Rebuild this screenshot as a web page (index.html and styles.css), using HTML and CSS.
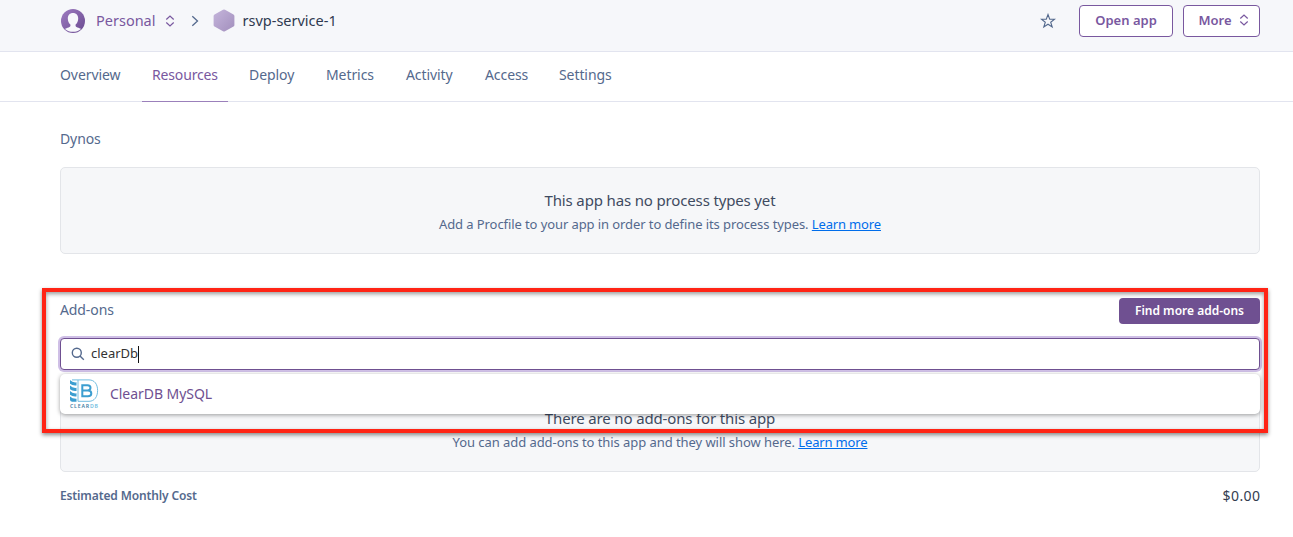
FILE: index.html
```html
<!DOCTYPE html>
<html lang="en">
<head>
<meta charset="utf-8">
<title>rsvp-service-1 · Resources</title>
<link rel="stylesheet" href="styles.css">
</head>
<body>
<header class="topbar">
  <svg class="avatar" viewBox="0 0 24 24"><defs><linearGradient id="av" x1="0" y1="0" x2="1" y2="1"><stop offset="0" stop-color="#9e7cc1"/><stop offset="1" stop-color="#6a4a90"/></linearGradient></defs><circle cx="12" cy="12" r="12" fill="url(#av)"/><path d="M12 4c-3.200 0-5.200 2.200-5.200 5.400 0 2.600 1 4.800 2.600 6 .3 1.800-.4 2.500-1.800 3-1.500.5-2.600.700-3.600 1.500C6.200 21.800 9 22.800 12 22.800s5.800-1 8-2.900c-1-.8-2.100-1-3.600-1.500-1.400-.5-2.100-1.200-1.800-3 1.600-1.200 2.600-3.400 2.600-6C17.200 6.200 15.200 4 12 4z" fill="#f7f8fb"/></svg>
  <span class="account">Personal</span>
  <svg class="updown" viewBox="0 0 10 12"><path d="M1.300 4.500 5 1l3.700 3.500M1.300 7.500 5 11l3.700-3.500"/></svg>
  <svg class="crumb" viewBox="0 0 8 12"><path d="M1.300 1.200 6.500 6l-5.200 4.800"/></svg>
  <svg class="hex" viewBox="0 0 22 23"><defs><linearGradient id="hx" x1="0" y1="0" x2="1" y2="1"><stop offset="0" stop-color="#c5b5db"/><stop offset="1" stop-color="#a28fbd"/></linearGradient></defs><path d="M10 .8q1-.6 2 0l8.500 4.700q.9.500.9 1.500v9q0 1-.9 1.500L12 22.200q-1 .6-2 0l-8.500-4.700Q.6 17 .6 16V7q0-1 .9-1.500z" fill="url(#hx)"/></svg>
  <span class="appname">rsvp-service-1</span>
  <svg class="star" viewBox="0 0 16 16"><path d="M8 1.500 9.700 6.200H14.600L10.700 9.200 12.200 14 8 11.200 3.800 14 5.300 9.200 1.400 6.200H6.300z"/></svg>
  <a class="btn open">Open app</a>
  <a class="btn more"><span>More</span><svg class="updown" viewBox="0 0 10 12"><path d="M1.300 4.500 5 1l3.700 3.500M1.300 7.500 5 11l3.700-3.500"/></svg></a>
</header>
<nav class="tabs">
  <a class="tab t-overview">Overview</a>
  <a class="tab t-resources active">Resources</a>
  <a class="tab t-deploy">Deploy</a>
  <a class="tab t-metrics">Metrics</a>
  <a class="tab t-activity">Activity</a>
  <a class="tab t-access">Access</a>
  <a class="tab t-settings">Settings</a>
</nav>
<main class="content">
  <h2 class="heading dynos">Dynos</h2>
  <section class="panel">
    <p class="panel-title">This app has no process types yet</p>
    <p class="panel-text"><span class="procfile">Add a Procfile to your app in order to define its process types.</span> <a class="link">Learn more</a></p>
  </section>
  <section class="addons">
    <div class="addons-head">
      <h2 class="heading addons-title">Add-ons</h2>
      <a class="find">Find more add-ons</a>
    </div>
    <div class="search">
      <svg class="magnifier" viewBox="0 0 14 14"><circle cx="5.800" cy="5.800" r="4.500"/><path d="m9 9 3.800 3.800"/></svg>
      <span class="query">clearDb</span><span class="caret"></span>
      <div class="menu">
        <svg class="cleardb" viewBox="0 0 30 30">
          <g fill="#3c9ed0"><path d="M1 1q2.500 2.800 6.500 2.300v3.200Q3.500 7 1 4.800zM1 6.500q2.500 2.800 6.500 2.300v3.200Q3.500 12.500 1 10.300zM1 12q2.500 2.800 6.500 2.300v3.200Q3.500 18 1 15.800zM1 17.500q2.500 2.500 6.500 2.300v3H3q-2-.3-2-2z"/></g>
          <path d="M3 .9h17c5.500 0 8.600 4.300 8.600 10.600S25.500 22.300 20 22.300H9V1" fill="none" stroke="#72bde0" stroke-width="1"/>
          <path d="M13.300 6.200h5.200q3 0 3 2.600 0 2.700-3 2.700h-5.200zm0 5.300h5.700q3.300 0 3.300 2.900 0 2.800-3.300 2.800h-5.700z" fill="none" stroke="#3c9ed0" stroke-width="2"/>
          <text x="1" y="28.800" textLength="28" class="logo-text">CLEAR<tspan class="logo-light">DB</tspan></text>
        </svg>
        <span class="menu-label">ClearDB MySQL</span>
      </div>
    </div>
    <div class="panel addons-panel">
      <p class="panel-title">There are no add-ons for this app</p>
      <p class="panel-text none">You can add add-ons to this app and they will show here. <a class="link">Learn more</a></p>
    </div>
    <div class="highlight"></div>
  </section>
  <footer class="cost"><span class="cost-label">Estimated Monthly Cost</span><span class="price">$0.00</span></footer>
</main>
</body>
</html>
```
FILE: styles.css
```css
* { box-sizing: border-box; }
body { margin: 0; background: #fff; color: #54698d; font-family: "Noto Sans", sans-serif; font-size: 14px; line-height: 20px; overflow: hidden; white-space: nowrap; }
p, h2 { margin: 0; font-weight: 400; }
svg { display: block; flex: none; fill: none; }

.topbar { display: flex; align-items: center; height: 52px; padding: 0 33px 10px 61px; background: #f6f7fa; border-bottom: 1px solid #e2e4ef; }
.avatar { width: 24px; height: 24px; }
.account { width: 60px; margin-left: 11px; padding-bottom: 2px; color: #79589f; font-size: 14.5px; }
.updown { width: 10px; height: 12px; stroke: #79589f; stroke-width: 1.2; }
.topbar > .updown { margin-left: 9px; }
.crumb { width: 8px; height: 12px; margin-left: 16px; stroke: #54698d; stroke-width: 1.3; }
.hex { width: 22px; height: 23px; margin-left: 14px; }
.appname { margin-left: 7.5px; padding-bottom: 2px; color: #2f3a50; font-size: 14.5px; }
.star { width: 16px; height: 16px; margin-left: auto; margin-right: 23px; stroke: #54698d; stroke-width: 1.1; }
.btn { display: flex; align-items: center; justify-content: center; height: 32px; padding-bottom: 1px; border: 1px solid #79589f; border-radius: 4px; background: #fff; color: #79589f; font-size: 13px; font-weight: 600; }
.open { width: 94px; margin-right: 10px; }
.more { width: 77px; gap: 7px; padding-left: 4px; }

.tabs { display: flex; gap: 11px; height: 50px; padding-left: 50px; border-bottom: 1px solid #e2e4ef; font-size: 14px; }
.tab { height: 50px; padding: 13px 10px 0; border-bottom: 1px solid transparent; letter-spacing: -.08px; }
.active { color: #79589f; border-color: #9b80bb; letter-spacing: -.15px; }
.t-overview { width: 81px; }
.t-resources { width: 86px; }
.t-deploy { width: 66px; }
.t-metrics { width: 69px; }
.t-activity { width: 68px; }
.t-access { width: 63px; }

.content { padding: 27px 33px 0 60px; }
.heading { font-size: 14px; line-height: 20px; letter-spacing: -.1px; }
.panel { height: 87px; margin-top: 18px; padding-top: 20px; border: 1px solid #e3e5e9; border-radius: 5px; background: #f6f7f9; text-align: center; }
.panel-title { color: #3f4b61; font-size: 15px; line-height: 24px; letter-spacing: -.15px; }
.panel-text { font-size: 13px; line-height: 24px; letter-spacing: -.09px; }
.none { letter-spacing: -.06px; }
.link { color: #006deb; text-decoration: underline; text-underline-offset: 1px; letter-spacing: -.15px; }

.addons { position: relative; margin-top: 44px; }
.addons-head { display: flex; justify-content: space-between; height: 26px; }
.addons-title { margin-top: 2px; }
.find { width: 141px; height: 26px; border-radius: 4px; background: #6f5091; color: #fff; text-align: center; font-size: 12px; font-weight: 600; line-height: 26px; }
.search { position: relative; display: flex; align-items: center; height: 32px; margin-top: 14px; padding-left: 10px; border: 1px solid #6f5091; border-radius: 4px; background: #fff; box-shadow: 0 0 0 2px #cfbfe6; }
.magnifier { width: 14px; height: 14px; stroke: #54698d; stroke-width: 1.4; }
.query { margin-left: 6px; padding-bottom: 2px; color: #333; font-size: 13px; }
.caret { width: 1px; height: 17px; background: #111; }
.menu { position: absolute; z-index: 1; top: 35px; left: -1px; right: -1px; display: flex; align-items: center; height: 40px; padding-left: 9px; border-radius: 5px; background: #fff; box-shadow: 0 1px 4px rgba(0,0,0,.38); }
.cleardb { width: 30px; height: 30px; }
.logo-text { fill: #3f7fa5; font: 600 5.2px "Noto Sans", sans-serif; }
.logo-light { fill: #72bde0; }
.menu-label { margin-left: 11px; color: #6f5091; font-size: 14px; letter-spacing: -.05px; }
.addons-panel { margin-top: 15px; }
.highlight { position: absolute; z-index: 2; top: -10px; left: -18px; width: 1226px; height: 145px; border: 4px solid #ff2415; box-shadow: 0 2px 4px rgba(0,0,0,.45), inset 0 2px 4px rgba(0,0,0,.4); }
.cost { display: flex; justify-content: space-between; margin-top: 14px; }
.cost-label { font-size: 12px; font-weight: 600; letter-spacing: -.13px; }
.price { color: #333d50; font-size: 14px; letter-spacing: .4px; margin-right: -.4px; }
```
